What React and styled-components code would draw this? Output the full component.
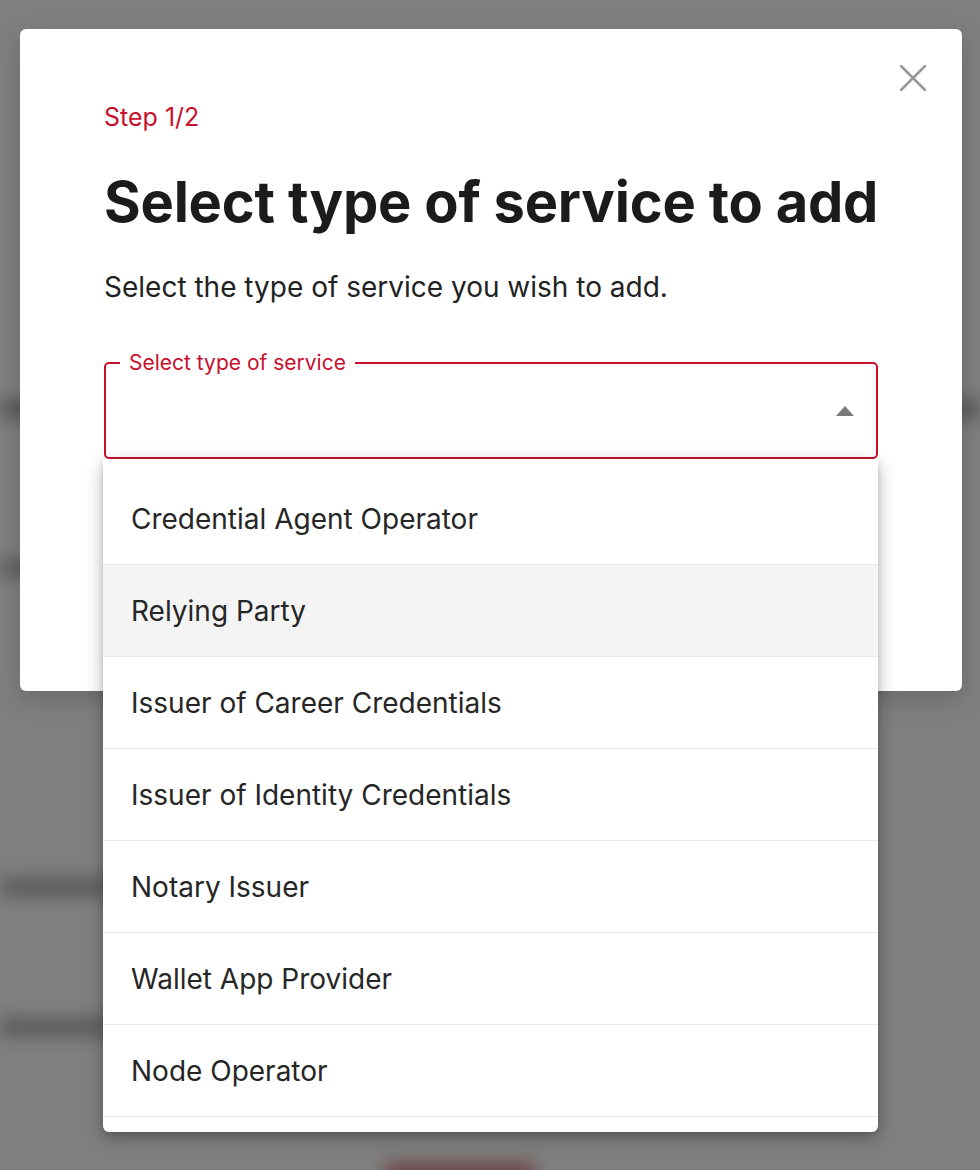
import React from 'react'
import styled, { createGlobalStyle } from 'styled-components'

const GlobalStyle = createGlobalStyle`
  html, body {
    margin: 0;
    padding: 0;
  }
  body {
    font-family: Inter, "Noto Sans", "Liberation Sans", sans-serif;
    background: #ffffff;
  }
`

const Screen = styled.div`
  position: relative;
  width: 980px;
  height: 1170px;
  overflow: hidden;
`

/* the page behind the dialog, seen blurred */
const BackPage = styled.div`
  display: flex;
  flex-direction: column;
  height: 100%;
  padding: 400px 0 0 0;
  box-sizing: border-box;
  background: #ffffff;
  filter: blur(9px);
`

const BackLine = styled.div`
  flex-shrink: 0;
  height: ${(p) => p.h || 16}px;
  width: ${(p) => p.w}px;
  margin-top: ${(p) => p.mt || 0}px;
  margin-left: ${(p) => p.ml || 0}px;
  background: ${(p) => p.color || '#b0b0b0'};
  border-radius: 4px;
`

const Overlay = styled.div`
  position: absolute;
  inset: 0;
  background: rgba(0, 0, 0, 0.5);
`

const Modal = styled.div`
  position: absolute;
  top: 29px;
  left: 20px;
  width: 942px;
  height: 662px;
  box-sizing: border-box;
  padding: 73px 84px 0;
  background: #ffffff;
  border-radius: 6px;
  box-shadow: 0 8px 24px rgba(0, 0, 0, 0.18);
`

const CloseButton = styled.button`
  position: absolute;
  top: 33px;
  right: 33px;
  width: 32px;
  height: 32px;
  padding: 0;
  border: 0;
  background: transparent;
  display: flex;
  align-items: center;
  justify-content: center;
  cursor: pointer;
`

const StepLabel = styled.div`
  color: #c8102e;
  font-size: 25px;
  line-height: 30px;
`

const Title = styled.h1`
  margin: 38px 0 0;
  color: #1b1b1b;
  font-size: 56px;
  line-height: 64px;
  font-weight: 700;
  letter-spacing: -0.2px;
  white-space: nowrap;
`

const Lead = styled.p`
  margin: 36px 0 0;
  color: #222222;
  font-size: 28px;
  line-height: 34px;
`

const FieldWrap = styled.div`
  position: relative;
  margin-top: 47px;
`

const Field = styled.fieldset`
  margin: 0;
  padding: 0 22px 0 0;
  height: 108px;
  box-sizing: border-box;
  border: 2px solid #c8102e;
  border-radius: 5px;
  display: flex;
  align-items: center;
  justify-content: flex-end;
  min-width: 0;
`

const Legend = styled.legend`
  margin-left: 14px;
  padding: 0 9px;
  color: #c8102e;
  font-size: 21px;
  line-height: 24px;
`

const Caret = styled.span`
  width: 0;
  height: 0;
  border-left: 9px solid transparent;
  border-right: 9px solid transparent;
  border-bottom: 10px solid #7a7a7a;
  margin-top: -10px;
`

const Menu = styled.ul`
  position: absolute;
  top: 100%;
  left: -1px;
  right: 0;
  margin: 0;
  padding: 14px 0 15px;
  list-style: none;
  background: #ffffff;
  border-radius: 0 0 6px 6px;
  box-shadow: 0 6px 18px rgba(0, 0, 0, 0.28), 0 2px 6px rgba(0, 0, 0, 0.12);
`

const MenuItem = styled.li`
  height: 92px;
  box-sizing: border-box;
  display: flex;
  align-items: center;
  padding-left: 28px;
  border-bottom: 1px solid #e9e9e9;
  color: #262626;
  font-size: 28px;
  background: ${(p) => (p.active ? '#f4f4f4' : '#ffffff')};
`

const services = [
  'Credential Agent Operator',
  'Relying Party',
  'Issuer of Career Credentials',
  'Issuer of Identity Credentials',
  'Notary Issuer',
  'Wallet App Provider',
  'Node Operator',
]

const CloseIcon = () => (
  <svg width="26" height="26" viewBox="0 0 26 26">
    <path d="M1 1 L25 25 M25 1 L1 25" stroke="#999999" strokeWidth="2.6" strokeLinecap="round" />
  </svg>
)

export default function App() {
  return (
    <Screen>
      <GlobalStyle />
      <BackPage>
        <BackLine w={980} h={18} color="#a8a8a8" />
        <BackLine w={90} h={16} mt={142} />
        <BackLine w={110} h={18} mt={302} />
        <BackLine w={110} h={18} mt={122} />
        <BackLine w={150} h={40} mt={126} ml={385} color="#d98c8c" />
      </BackPage>
      <Overlay />
      <Modal>
        <CloseButton aria-label="Close">
          <CloseIcon />
        </CloseButton>
        <StepLabel>Step 1/2</StepLabel>
        <Title>Select type of service to add</Title>
        <Lead>Select the type of service you wish to add.</Lead>
        <FieldWrap>
          <Field>
            <Legend>Select type of service</Legend>
            <Caret />
          </Field>
          <Menu>
            {services.map((s, i) => (
              <MenuItem key={s} active={i === 1}>
                {s}
              </MenuItem>
            ))}
          </Menu>
        </FieldWrap>
      </Modal>
    </Screen>
  )
}
